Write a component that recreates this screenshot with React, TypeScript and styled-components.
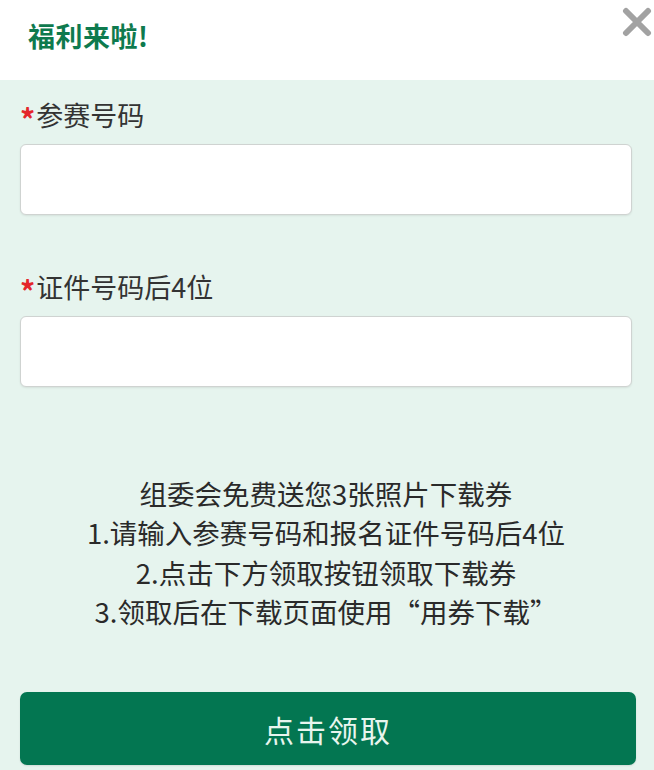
import React from "react";
import styled, { createGlobalStyle } from "styled-components";

const Global = createGlobalStyle`
  html, body { margin: 0; padding: 0; background: #e6f4ee; }
  body { font-family: "Noto Sans CJK SC", "Noto Sans", sans-serif; }
  * { box-sizing: border-box; }
`;

const Page = styled.div`
  width: 654px;
  height: 770px;
  background: #e6f4ee;
  display: flex;
  flex-direction: column;
  overflow: hidden;
`;

const Header = styled.header`
  height: 80px;
  background: #ffffff;
  position: relative;
  display: flex;
  align-items: center;
  padding-left: 28px;
  flex-shrink: 0;
`;

const Title = styled.h1`
  margin: 0 0 10px 0;
  font-size: 27px;
  font-weight: 700;
  color: #0e7a4e;
  line-height: 1;
  letter-spacing: 0.5px;
`;

const Close = styled.button`
  position: absolute;
  top: 6px;
  right: 1px;
  width: 32px;
  height: 32px;
  padding: 0;
  border: none;
  background: transparent;
  display: flex;
  align-items: center;
  justify-content: center;
`;

const Body = styled.main`
  display: flex;
  flex-direction: column;
  padding: 15px 0 0 20px;
`;

const Label = styled.label<{ $gap: number }>`
  display: flex;
  align-items: center;
  margin-top: ${(p) => p.$gap}px;
  height: 40px;
  font-size: 27px;
  color: #333333;
  line-height: 40px;
`;

const Star = styled.span`
  color: #e4262a;
  font-size: 30px;
  font-weight: 700;
  margin-right: 1px;
  position: relative;
  top: 3px;
`;

const Input = styled.input`
  margin-top: 9px;
  width: 612px;
  height: 71px;
  border: 1px solid #cfd3d1;
  border-radius: 6px;
  background: #ffffff;
  box-shadow: 0 1px 2px rgba(0, 0, 0, 0.08);
  outline: none;
  font-size: 26px;
  padding: 0 14px;
`;

const Notice = styled.div`
  margin-top: 87px;
  width: 612px;
  text-align: center;
  font-size: 27.5px;
  line-height: 39.3px;
  color: #2a2a2a;
`;

const Line = styled.div``;

const Submit = styled.button`
  margin-top: 61px;
  width: 616px;
  height: 73px;
  border: none;
  border-radius: 7px;
  background: #037651;
  color: #e8f5ee;
  font-family: "Noto Sans CJK SC", "Noto Sans", sans-serif;
  font-size: 30px;
  letter-spacing: 2px;
  box-shadow: 0 1px 2px rgba(0, 0, 0, 0.1);
`;

export default function App() {
  return (
    <>
      <Global />
      <Page>
        <Header>
          <Title>福利来啦!</Title>
          <Close aria-label="关闭">
            <svg width="30" height="30" viewBox="0 0 30 30">
              <path
                d="M4 4 L26 26 M26 4 L4 26"
                stroke="#a2a2a2"
                strokeWidth="6"
                strokeLinecap="round"
              />
            </svg>
          </Close>
        </Header>
        <Body>
          <Label $gap={0}>
            <Star>*</Star>参赛号码
          </Label>
          <Input type="text" />
          <Label $gap={52}>
            <Star>*</Star>证件号码后4位
          </Label>
          <Input type="text" />
          <Notice>
            <Line>组委会免费送您3张照片下载券</Line>
            <Line>1.请输入参赛号码和报名证件号码后4位</Line>
            <Line>2.点击下方领取按钮领取下载券</Line>
            <Line>3.领取后在下载页面使用“用券下载”</Line>
          </Notice>
          <Submit>点击领取</Submit>
        </Body>
      </Page>
    </>
  );
}
